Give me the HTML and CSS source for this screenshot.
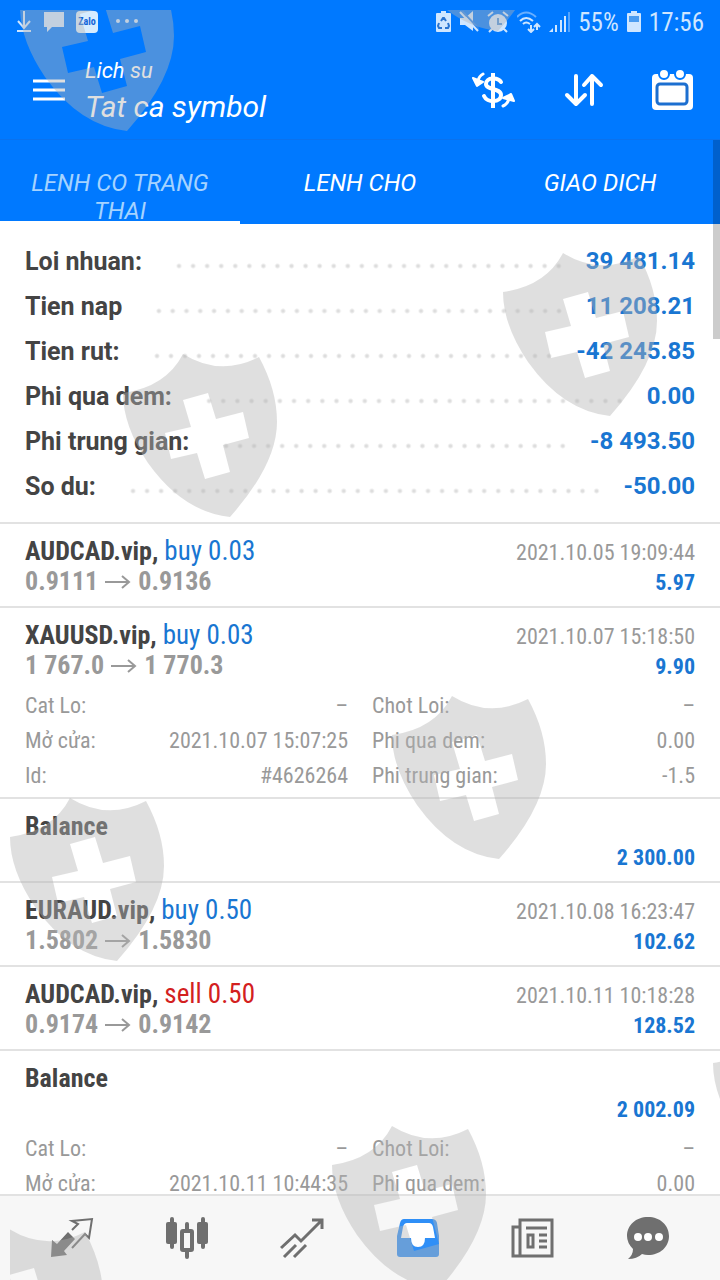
FILE: index.html
```html
<!DOCTYPE html>
<html lang="vi">
<head>
    <meta charset="UTF-8">
    <meta name="viewport" content="width=device-width, initial-scale=1.0">
    <title>Lich su</title>
    <link rel="stylesheet" href="styles.css">
</head>
<body>
    <div class="app">
        <div class="status-bar">
            <div class="status-left">
                <svg class="status-icon" width="16" height="22" viewBox="0 0 16 22" fill="none" stroke="currentColor" stroke-width="2"><path d="M8 0v16M2 10l6 7 6-7M1 20h14"/></svg>
                <svg class="status-icon" width="22" height="22" viewBox="0 0 22 22" fill="currentColor"><path d="M1 1h20v15H9l-5 5v-5H1z"/></svg>
                <span class="zalo">Zalo</span>
                <svg class="status-icon" width="32" height="22" viewBox="0 0 32 22" fill="currentColor"><circle cx="9" cy="10" r="2"/><circle cx="18" cy="10" r="2"/><circle cx="27" cy="10" r="2"/></svg>
            </div>
            <div class="status-right">
                <svg class="status-icon" width="15" height="22" viewBox="0 0 15 22"><path d="M5 0h5v2h4q1 0 1 1v17q0 1-1 1H1q-1 0-1-1V3q0-1 1-1h4z" fill="currentColor"/><path d="M5 10l2-3h1l2 3M12 12l1 3-1 2H9M6 17H3l-1-2 1-3" fill="none" stroke="#2a74d0" stroke-width="2"/></svg>
                <svg class="status-icon" width="20" height="22" viewBox="0 0 20 22"><path d="M1 7h5l8-7v20l-8-6H1z" fill="currentColor"/><path d="M3 0l17 18" stroke="#2a85ee" stroke-width="2"/><path d="M1 1l18 19" stroke="currentColor" stroke-width="2"/></svg>
                <svg class="status-icon" width="22" height="22" viewBox="0 0 22 22"><circle cx="11" cy="12" r="9" fill="currentColor"/><path d="M1 5l5-4M21 5l-5-4M5 18l-3 3M17 18l3 3" stroke="currentColor" stroke-width="2"/><path d="M11 7v6h4" fill="none" stroke="#4a91dd" stroke-width="2"/></svg>
                <svg class="status-icon" width="24" height="22" viewBox="0 0 24 22" fill="none" stroke="currentColor" stroke-width="2"><path d="M0 6q9-9 19 0" opacity=".5"/><path d="M3 10q6-6 13 0M6 13q3-3 7 0"/><path d="M14 14v6M11 18l3 3 3-3M20 19v-6M17 16l3-3 3 3"/></svg>
                <svg class="status-icon" width="21" height="22" viewBox="0 0 21 22" fill="currentColor"><path d="M0 21l4-4v4zM6 14h2v7H6zM11 9h2v12h-2zM15 5h2v16h-2z"/><path d="M19 1h2v20h-2z" opacity=".4"/></svg>
                <span class="battery-text">55%</span>
                <svg class="status-icon" width="14" height="22" viewBox="0 0 14 22"><path d="M4 0h6v2h3q1 0 1 1v17q0 1-1 1H1q-1 0-1-1V3q0-1 1-1h3z" fill="currentColor"/><path d="M2 5h10v6H2z" fill="#4b9cf0"/></svg>
                <span class="clock">17:56</span>
            </div>
        </div>

        <header class="header">
            <button class="icon-button menu-button" aria-label="Menu">
                <svg width="32" height="22" viewBox="0 0 32 22" stroke="#fff" stroke-width="3"><path d="M0 2h32M0 11h32M0 20h32"/></svg>
            </button>
            <div class="header-text">
                <div class="header-sub">Lich su</div>
                <h1 class="header-title">Tat ca symbol</h1>
            </div>
            <div class="header-actions">
                <button class="icon-button" aria-label="Symbol">
                    <svg width="44" height="42" viewBox="0 0 44 42" fill="none" stroke="#fff" stroke-linecap="round"><path d="M29 13c-3-5-15-5-15 2 0 6 15 4 15 11 0 8-14 8-17 1" stroke-width="4"/><path d="M21 4v35" stroke-width="4" stroke-linecap="butt"/><path d="M11 5Q7 7 6 12M31 37q5-2 6-8" stroke-width="3"/><path d="M1 9l10 4-6 4zM31 29l8-4 3 7z" fill="#fff" stroke-width="2" stroke-linejoin="round"/></svg>
                </button>
                <button class="icon-button" aria-label="Sap xep">
                    <svg width="40" height="34" viewBox="0 0 40 34" fill="none" stroke="#fff" stroke-width="4" stroke-linecap="round" stroke-linejoin="round"><path d="M12 3v27M3 22l9 9 9-9M28 31V3M20 12l8-9 9 9"/></svg>
                </button>
                <button class="icon-button" aria-label="Thoi gian">
                    <svg width="42" height="42" viewBox="0 0 42 42"><rect x="0" y="5" width="41" height="36" rx="4" fill="#fff"/><circle cx="12" cy="5" r="5" fill="#fff" stroke="#0079ff" stroke-width="2"/><circle cx="28" cy="5" r="5" fill="#fff" stroke="#0079ff" stroke-width="2"/><rect x="5" y="15" width="30" height="20" rx="3" fill="#fff" stroke="#1c6fd0" stroke-width="3"/></svg>
                </button>
            </div>
        </header>

        <nav class="tabs">
            <button class="tab tab-active">LENH CO TRANG THAI</button>
            <button class="tab">LENH CHO</button>
            <button class="tab">GIAO DICH</button>
        </nav>

        <main class="content">
            <section class="summary">
                <div class="summary-row"><span>Loi nhuan:</span><i class="dots"></i><span class="summary-value">39 481.14</span></div>
                <div class="summary-row"><span>Tien nap</span><i class="dots"></i><span class="summary-value">11 208.21</span></div>
                <div class="summary-row"><span>Tien rut:</span><i class="dots"></i><span class="summary-value">-42 245.85</span></div>
                <div class="summary-row"><span>Phi qua dem:</span><i class="dots"></i><span class="summary-value">0.00</span></div>
                <div class="summary-row"><span>Phi trung gian:</span><i class="dots"></i><span class="summary-value">-8 493.50</span></div>
                <div class="summary-row"><span>So du:</span><i class="dots"></i><span class="summary-value">-50.00</span></div>
            </section>

            <section class="deal">
                <div class="line"><span class="symbol"><b>AUDCAD.vip,</b> <span class="buy">buy 0.03</span></span><span class="date">2021.10.05 19:09:44</span></div>
                <div class="line"><span class="price">0.9111 <svg class="arrow" viewBox="0 0 26 16"><path d="M0 8h24M17 2l7 6-7 6"/></svg> 0.9136</span><span class="profit">5.97</span></div>
            </section>

            <section class="deal deal-open">
                <div class="line"><span class="symbol"><b>XAUUSD.vip,</b> <span class="buy">buy 0.03</span></span><span class="date">2021.10.07 15:18:50</span></div>
                <div class="line"><span class="price">1 767.0 <svg class="arrow" viewBox="0 0 26 16"><path d="M0 8h24M17 2l7 6-7 6"/></svg> 1 770.3</span><span class="profit">9.90</span></div>
                <div class="details">
                    <div class="detail"><span>Cat Lo:</span><span>–</span></div>
                    <div class="detail"><span>Chot Loi:</span><span>–</span></div>
                    <div class="detail"><span>Mở cửa:</span><span>2021.10.07 15:07:25</span></div>
                    <div class="detail"><span>Phi qua dem:</span><span>0.00</span></div>
                    <div class="detail"><span>Id:</span><span>#4626264</span></div>
                    <div class="detail"><span>Phi trung gian:</span><span>-1.5</span></div>
                </div>
            </section>

            <section class="deal">
                <div class="line"><b class="symbol">Balance</b></div>
                <div class="line line-end"><span class="profit">2 300.00</span></div>
            </section>

            <section class="deal">
                <div class="line"><span class="symbol"><b>EURAUD.vip,</b> <span class="buy">buy 0.50</span></span><span class="date">2021.10.08 16:23:47</span></div>
                <div class="line"><span class="price">1.5802 <svg class="arrow" viewBox="0 0 26 16"><path d="M0 8h24M17 2l7 6-7 6"/></svg> 1.5830</span><span class="profit">102.62</span></div>
            </section>

            <section class="deal">
                <div class="line"><span class="symbol"><b>AUDCAD.vip,</b> <span class="sell">sell 0.50</span></span><span class="date">2021.10.11 10:18:28</span></div>
                <div class="line"><span class="price">0.9174 <svg class="arrow" viewBox="0 0 26 16"><path d="M0 8h24M17 2l7 6-7 6"/></svg> 0.9142</span><span class="profit">128.52</span></div>
            </section>

            <section class="deal deal-open">
                <div class="line"><b class="symbol">Balance</b></div>
                <div class="line line-end"><span class="profit">2 002.09</span></div>
                <div class="details">
                    <div class="detail"><span>Cat Lo:</span><span>–</span></div>
                    <div class="detail"><span>Chot Loi:</span><span>–</span></div>
                    <div class="detail"><span>Mở cửa:</span><span>2021.10.11 10:44:35</span></div>
                    <div class="detail"><span>Phi qua dem:</span><span>0.00</span></div>
                </div>
            </section>
        </main>

        <nav class="bottom-nav">
            <button class="nav-button" aria-label="Gia">
                <svg width="44" height="42" viewBox="0 0 44 42"><path d="M1 40l1-17 5 4 11-12 7 7-11 12 3 4z" fill="#6f6f6f"/><path d="M22 13l6-6-6-3 20-2-3 19-4-4-13 14" fill="none" stroke="#6f6f6f" stroke-width="2"/></svg>
            </button>
            <button class="nav-button" aria-label="Bieu do">
                <svg width="44" height="42" viewBox="0 0 44 42" fill="#6f6f6f"><rect x="1" y="5" width="11" height="22" rx="2"/><rect x="5" y="0" width="4" height="32" rx="2"/><rect x="32" y="5" width="11" height="22" rx="2"/><rect x="36" y="0" width="4" height="32" rx="2"/><rect x="20" y="5" width="4" height="9" rx="2"/><rect x="20" y="33" width="4" height="9" rx="2"/><rect x="17" y="14" width="10" height="19" rx="1" fill="none" stroke="#6f6f6f" stroke-width="4"/></svg>
            </button>
            <button class="nav-button" aria-label="Giao dich">
                <svg width="44" height="42" viewBox="0 0 44 42" fill="none" stroke="#6f6f6f" stroke-width="3"><path d="M1 31l14-13 6 6L41 4M32 3h10v9M4 40l12-12M14 40l12-12"/></svg>
            </button>
            <button class="nav-button" aria-label="Lich su">
                <svg width="44" height="42" viewBox="0 0 44 42"><path d="M8 2h28q4 0 5 4l2 13v18q0 3-3 3H4q-3 0-3-3V19L4 6q1-4 4-4z" fill="#2f8ff7"/><path d="M11 6h22q3 0 4 4l2 11H29q0 9-7 9t-7-9H5L7 10q1-4 4-4z" fill="#fff"/></svg>
            </button>
            <button class="nav-button" aria-label="Tin tuc">
                <svg width="44" height="42" viewBox="0 0 44 42" fill="none" stroke="#6f6f6f" stroke-width="3"><path d="M9 3h32v36H9zM9 10H2v29h7"/><path d="M15 11h21M28 18h8M28 24h8M28 30h8"/><rect x="17" y="18" width="5" height="12"/></svg>
            </button>
            <button class="nav-button" aria-label="Tin nhan">
                <svg width="44" height="42" viewBox="0 0 44 42"><path d="M22 0c12 0 21 8 21 19s-9 19-21 19q-3 0-6-1-5 5-14 5 5-4 5-10Q1 26 1 19C1 8 10 0 22 0z" fill="#6f6f6f"/><circle cx="12" cy="20" r="4" fill="#fff"/><circle cx="22" cy="20" r="4" fill="#fff"/><circle cx="33" cy="20" r="4" fill="#fff"/></svg>
            </button>
        </nav>

        <div class="scroll-thumb"></div>

        <!-- watermark -->
        <div class="watermark" aria-hidden="true">
            <svg width="710" height="1270" viewBox="10 10 710 1270">
                <defs>
                    <path id="shield" fill-rule="evenodd" d="M60 0Q97 23 136 3Q154 36 154 68Q154 110 107 163Q60 158 25 109Q0 72 0 39Q43 33 60 0ZM60 46L68 73 42 79 48 105 74 99 82 125 107 118 100 91 126 84 120 58 93 65 85 39Z"/>
                </defs>
                <use href="#shield" x="20" y="-32"/>
                <use href="#shield" x="391" y="-132"/>
                <use href="#shield" x="503" y="253"/>
                <use href="#shield" x="123" y="354"/>
                <use href="#shield" x="392" y="696"/>
                <use href="#shield" x="10" y="798"/>
                <use href="#shield" x="713" y="1024"/>
                <use href="#shield" x="332" y="1126"/>
                <use href="#shield" x="-51" y="1229"/>
            </svg>
        </div>
    </div>
</body>
</html>
```
FILE: styles.css
```css
* {
    margin: 0;
    padding: 0;
    box-sizing: border-box;
}

body {
    font-family: Roboto, "Noto Sans", sans-serif;
    background-color: #fff;
    color: #444;
}

button {
    border: none;
    background: none;
    font: inherit;
    color: inherit;
    cursor: pointer;
}

.app {
    position: relative;
    height: 100vh;
    display: flex;
    flex-direction: column;
    overflow: hidden;
}

/* status bar */
.status-bar {
    display: flex;
    justify-content: space-between;
    align-items: center;
    height: 44px;
    padding: 0 16px;
    background-color: #0079ff;
    color: #cfe6ff;
    font-family: "Roboto Condensed", Roboto, sans-serif;
    font-size: 25px;
}

.status-left {
    display: flex;
    align-items: center;
    gap: 11px;
}

.status-right {
    display: flex;
    align-items: center;
    gap: 8px;
}

.status-icon {
    display: block;
}

.zalo {
    width: 22px;
    height: 22px;
    border-radius: 4px;
    background-color: #d6ecff;
    color: #1565d8;
    font-size: 10px;
    font-weight: bold;
    line-height: 22px;
    text-align: center;
}

/* header */
.header {
    display: flex;
    align-items: center;
    height: 96px;
    padding: 0 26px 3px 33px;
    background-color: #0079ff;
    border-bottom: 1px solid #0a72ee;
    color: #fff;
    font-style: italic;
}

.icon-button svg {
    display: block;
}

.header-text {
    flex: 1;
    margin-left: 20px;
}

.header-sub {
    font-size: 22px;
    line-height: 34px;
}

.header-title {
    font-size: 30px;
    font-weight: normal;
    line-height: 38px;
}

.header-actions {
    display: flex;
    align-items: center;
    gap: 48px;
}

/* tabs */
.tabs {
    display: grid;
    grid-template-columns: repeat(3, 1fr);
    height: 84px;
    background-color: #0079ff;
    color: #fff;
}

.tab {
    display: flex;
    justify-content: center;
    align-items: flex-start;
    height: 84px;
    padding: 29px 20px 0;
    overflow: hidden;
    font-size: 24px;
    font-style: italic;
    line-height: 28px;
}

.tab-active {
    color: #a5d3ff;
    border-bottom: 3px solid #fff;
}

/* content */
.content {
    flex: 1;
    min-height: 0;
    overflow: hidden;
}

.summary {
    padding: 15px 25px 13px;
    border-bottom: 2px solid #e2e2e2;
}

.summary-row {
    display: flex;
    font-size: 25px;
    font-weight: bold;
    line-height: 45px;
}

.summary-value {
    font-size: 24px;
    color: #1976d2;
}

.dots {
    flex: 1;
    margin: 0 20px 0 30px;
    background: radial-gradient(circle, #ddd 1px, transparent 3px) 0 20px / 14px 14px round no-repeat;
}

.deal {
    padding: 12px 25px 10px;
    border-bottom: 2px solid #e2e2e2;
    font-family: "Roboto Condensed", Roboto, sans-serif;
}

.deal-open {
    padding-bottom: 4px;
}

.line {
    display: flex;
    justify-content: space-between;
    height: 30px;
    line-height: 30px;
}

.line-end {
    justify-content: flex-end;
}

.symbol {
    font-size: 26px;
}

.buy,
.sell {
    font-size: 27px;
}

.buy {
    color: #1976d2;
}

.sell {
    color: #d32020;
}

.price {
    font-size: 26px;
    font-weight: bold;
    color: #999;
}

.arrow {
    width: 28px;
    height: 16px;
    fill: none;
    stroke: #999;
    stroke-width: 2;
}

.date {
    font-size: 22px;
    line-height: 34px;
    color: #999;
}

.profit {
    font-size: 22px;
    font-weight: bold;
    line-height: 34px;
    color: #1976d2;
}

.details {
    display: grid;
    grid-template-columns: 1fr 1fr;
    column-gap: 24px;
    padding-top: 8px;
}

.detail {
    display: flex;
    justify-content: space-between;
    font-size: 22px;
    line-height: 35px;
    color: #999;
}

/* bottom bar */
.bottom-nav {
    display: flex;
    height: 86px;
    padding: 0 14px;
    background-color: #f7f7f7;
    border-top: 2px solid #e2e2e2;
}

.nav-button {
    flex: 1;
    display: flex;
    justify-content: center;
    align-items: center;
}

/* overlays */
.scroll-thumb {
    position: absolute;
    top: 140px;
    right: 0;
    width: 7px;
    height: 199px;
    background-color: rgba(0, 0, 0, 0.2);
}

.watermark {
    position: absolute;
    top: 10px;
    right: 0;
    bottom: 0;
    left: 10px;
    overflow: hidden;
    pointer-events: none;
    fill: rgba(178, 178, 178, 0.42);
}

.watermark svg {
    display: block;
}
```
